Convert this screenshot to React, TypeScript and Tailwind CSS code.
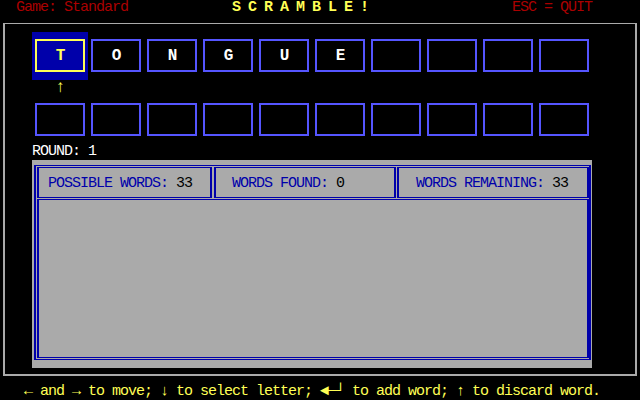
const letters = ["T", "O", "N", "G", "U", "E", "", "", "", ""];
const selected = 0;

function Tile({ letter, active }: { letter: string; active?: boolean }) {
  return (
    <div
      className={
        "w-[56px] h-[48px] pt-[7px] px-[3px] " + (active ? "bg-[#0000aa]" : "")
      }
    >
      <div
        className={
          "h-[33px] border-2 flex items-center justify-center font-bold text-[16px] " +
          (active
            ? "border-[#ffff55] text-[#ffff55]"
            : "border-[#5555ff] text-white")
        }
      >
        {letter}
      </div>
    </div>
  );
}

export default function App() {
  return (
    <div
      className="w-[640px] h-[400px] bg-black overflow-hidden text-[15px] leading-[16px] tracking-[-1px] whitespace-pre"
      style={{ fontFamily: '"Liberation Mono", "DejaVu Sans Mono", monospace' }}
    >
      {/* Header */}
      <div className="h-[16px] flex pl-[16px]">
        <span className="w-[216px] text-[#aa0000]">Game: Standard</span>
        <span className="w-[280px] text-[#ffff55] font-bold">S C R A M B L E !</span>
        <span className="text-[#aa0000]">ESC = QUIT</span>
      </div>

      {/* Frame */}
      <div className="mt-[7px] ml-[3px] w-[634px] h-[353px] border-x-2 border-t border-b-2 border-[#aaaaaa]">
        <div className="pl-[27px] pt-[8px]">
          <div className="flex">
            {letters.map((l, i) => (
              <Tile key={i} letter={l} active={i === selected} />
            ))}
          </div>

          <div className="flex h-[16px]">
            <div className="w-[56px] text-center text-[#ffff55] font-bold text-[17px] tracking-normal">
              ↑
            </div>
          </div>

          <div className="flex">
            {letters.map((_, i) => (
              <Tile key={i} letter="" />
            ))}
          </div>

          <div className="h-[16px] text-white">ROUND: 1</div>

          {/* Words panel */}
          <div className="w-[560px] h-[208px] bg-[#aaaaaa] pl-[2px] pt-[5px] pr-[1px]">
            <div className="h-[195px] border-x-2 border-y border-[#0000aa] pl-[1px] pt-[1px]">
              <div className="flex h-[31px]">
                <div className="w-[175px] border-x-2 border-y border-[#0000aa] pl-[9px] pt-[8px]">
                  <span className="text-[#0000aa]">POSSIBLE WORDS: </span>
                  <span className="text-black">33</span>
                </div>
                <div className="ml-[2px] w-[182px] border-x-2 border-y border-[#0000aa] pl-[16px] pt-[8px]">
                  <span className="text-[#0000aa]">WORDS FOUND: </span>
                  <span className="text-black">0</span>
                </div>
                <div className="ml-[1px] w-[192px] border-x-2 border-y border-[#0000aa] pl-[17px] pt-[8px]">
                  <span className="text-[#0000aa]">WORDS REMAINING: </span>
                  <span className="text-black">33</span>
                </div>
              </div>
              <div className="mt-[1px] w-[552px] h-[159px] border-x-2 border-y border-[#0000aa]" />
            </div>
          </div>
        </div>
      </div>

      {/* Footer */}
      <div className="mt-[8px] h-[16px] pl-[24px] text-[#ffff55]">
        ← and → to move; ↓ to select letter; ◄─┘ to add word; ↑ to discard word.
      </div>
    </div>
  );
}
